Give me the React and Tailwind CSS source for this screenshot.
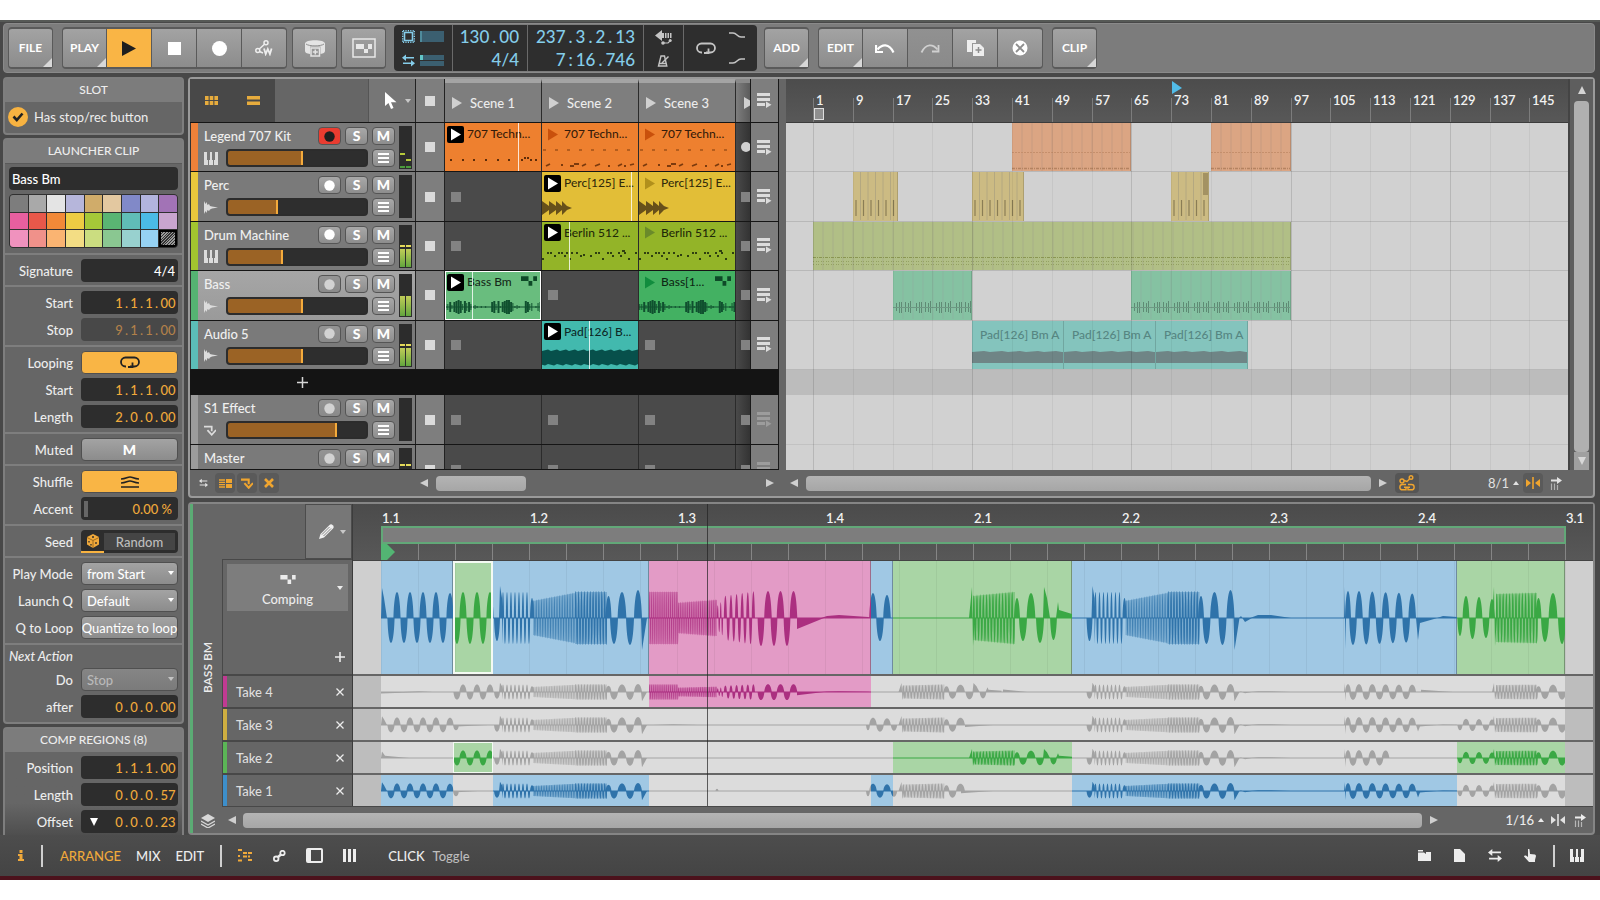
import React from "react";

/* ---------- data ---------- */

const TRACKS = [
  { name: "Legend 707 Kit", color: "#ee8139", icon: "keys", rec: "armed", level: 54, meter: "low", clips: [
    { name: "707 Techn...", bg: "#ee802f", art: "dots", playing: true, head: 74 },
    { name: "707 Techn...", bg: "#ee802f", art: "drums", tri: "#c9500c" },
    { name: "707 Techn...", bg: "#ee802f", art: "drums", tri: "#c9500c" },
  ] },
  { name: "Perc", color: "#e8c63c", icon: "wave", rec: "on", level: 36, meter: "off", clips: [
    null,
    { name: "Perc[125] E...", bg: "#e2be37", art: "perc", playing: true, head: 91 },
    { name: "Perc[125] E...", bg: "#e2be37", art: "perc", tri: "#b1901c" },
  ] },
  { name: "Drum Machine", color: "#a2c52f", icon: "keys", rec: "on", level: 40, meter: "mid", clips: [
    null,
    { name: "Berlin 512 ...", bg: "#93b428", art: "berlin", playing: true, head: 26 },
    { name: "Berlin 512 ...", bg: "#93b428", art: "berlin", tri: "#6a8a2a" },
  ] },
  { name: "Bass", color: "#55b372", icon: "wave", rec: "off", selected: true, level: 54, meter: "high", clips: [
    { name: "Bass Bm", bg: "#69bd7e", art: "bass", playing: true, head: 26, comp: true, selected: true },
    null,
    { name: "Bass[1...", bg: "#43b162", art: "bass", tri: "#118c3e", comp: true },
  ] },
  { name: "Audio 5", color: "#5bbdb8", icon: "wave", rec: "off", level: 54, meter: "mid", clips: [
    null,
    { name: "Pad[126] B...", bg: "#42b9ae", art: "pad", playing: true, head: 47 },
    null,
  ] },
];

const SWATCHES = [
  "#7d7d7d", "#a9a9a9", "#e4e4e4", "#b6b6db", "#d0ac6a", "#e3c8a0", "#8189c8", "#b2b4de", "#a273b6",
  "#e75f9f", "#e9584a", "#f28938", "#edcc43", "#a5c838", "#5ab573", "#60bdb7", "#4bbbe6", "#c9a5cf",
  "#f092be", "#f0918a", "#fab472", "#f3dd84", "#cbdd80", "#8ac791", "#98d1cf", "#96d2f3",
];

const BAR = 4.975;
const ORIGIN = 27;
const barX = (bar) => ORIGIN + (bar - 1) * BAR;

const LANES = [
  [{ from: 41, to: 65, kind: "orange" }, { from: 81, to: 97, kind: "orange" }],
  [{ from: 9, to: 18, kind: "yellow" }, { from: 33, to: 43.5, kind: "yellow" }, { from: 73, to: 80.5, kind: "yellow", fade: true }],
  [{ from: 1, to: 97, kind: "lime" }],
  [{ from: 17, to: 33, kind: "green" }, { from: 65, to: 97, kind: "green" }],
  [{ from: 33, to: 51.5, kind: "teal" }, { from: 51.5, to: 70, kind: "teal" }, { from: 70, to: 88.5, kind: "teal" }],
];

/* Editor x positions are measured from the left of the wave view. */
const REGIONS = [
  { x: 28, w: 72, c: "blue" },
  { x: 100, w: 40, c: "green", selected: true },
  { x: 140, w: 156, c: "blue" },
  { x: 296, w: 222, c: "pink" },
  { x: 518, w: 22, c: "blue" },
  { x: 540, w: 179, c: "green" },
  { x: 719, w: 385, c: "blue" },
  { x: 1104, w: 108, c: "green" },
];
const FILL = { blue: "#a0c8e4", green: "#a9d5a5", pink: "#e39bc6" };
const INK = { blue: "#2f73aa", green: "#3aa844", pink: "#ab2f80", gray: "#a3a3a3" };
const REGION_BG = { blue: "bg-[#a0c8e4]", green: "bg-[#a9d5a5]", pink: "bg-[#e39bc6]" };

const BEATS = ["1.1", "1.2", "1.3", "1.4", "2.1", "2.2", "2.3", "2.4", "3.1"];

/* ---------- wave shapes ---------- */

const lobe = (c, h, a) => ({ t: "lobe", c, h, a });
const wave = (x0, x1, p, a0, a1) => ({ t: "wave", x0, x1, p, a0, a1 });
const band = (x0, x1, a0, a1, p = 2.6) => ({ t: "band", x0, x1, a0, a1, p });
const poly = (...pts) => ({ t: "poly", pts });

const W_A = [
  poly([28, 0], [29, 30], [31, 20], [34, 0]),
  ...[38, 51, 64, 77, 90].map((c) => lobe(c, 3.6, -25)),
  ...[44, 57, 70, 83].map((c) => lobe(c, 3.6, 26)),
  lobe(97, 3.6, 25), lobe(103, 3, -18),
];
const W_B = [...[104, 117, 130].map((c) => lobe(c, 3.6, -26)), ...[110, 124, 137].map((c) => lobe(c, 3.6, 26))];
const wP = (o) => [
  lobe(o + 144, 3, -23), poly([o + 146, 0], [o + 147, 32], [o + 149, 20], [o + 149, -26], [o + 150, 0]),
  wave(o + 149, o + 178, 4, 26, 26), lobe(o + 179, 2, 20),
  band(o + 180, o + 222, 17, 25, 2.6), wave(o + 222, o + 254, 2.9, 27, 27), band(o + 222, o + 254, 26, 26, 2.9),
  lobe(o + 255.5, 3, 22), lobe(o + 261, 4, -26), lobe(o + 269, 4.4, 26), lobe(o + 277, 4, -27), lobe(o + 285, 4, 28),
  poly([o + 288, 0], [o + 289, -32], [o + 294, 0]),
];
const W_K = [
  band(296, 325, 26, 26, 2.1), band(325, 364, 15, 18, 2.2),
  wave(364, 370, 3, 12, 18), wave(371, 402, 5.6, 22, 27),
  ...[415, 427.5, 440.5].map((c) => lobe(c, 3.8, 27)), ...[408, 421, 434].map((c) => lobe(c, 3.4, -28)),
  poly([444, 0], [444, -11], [471, 0]), poly([468, 0], [474, 2], [486, 3], [515, 1], [518, 0]),
];
const W_C = [lobe(515, 2, -18), lobe(520, 3.8, 25), lobe(527, 3.8, -23), lobe(534, 3.8, 23), lobe(541, 3.2, -20)];
const wD = (o) => [
  poly([o + 616, 0], [o + 619, 31], [o + 620, -28], [o + 622, 0]),
  band(o + 620, o + 662, 22, 26, 3.2), wave(o + 620, o + 662, 3.2, 22, 26),
  lobe(o + 664, 3, 20), lobe(o + 670, 4, -23), lobe(o + 678, 4.4, 25), lobe(o + 687, 4, -25),
  poly([o + 690, 0], [o + 691, 31], [o + 694, 20], [o + 697, 0]), lobe(o + 700.5, 3.4, -22),
  poly([o + 703, 0], [o + 705, 16], [o + 706, 8], [o + 719, 4], [o + 719, 0]),
];
const W_TAIL = [poly([886, 0], [888, 2], [892, -4], [899, 0]), poly([897, 0], [905, 3], [918, 3], [938, 0])];
const wL = (n) => [
  poly([991, 0], [992, 31], [992, -31], [993, 0]),
  lobe(995, 3, 27),
  ...Array.from({ length: n }, (_, i) => lobe(1006 + i * 13.3, 3.8, 27 - i * 0.6)),
  ...Array.from({ length: n }, (_, i) => lobe(1000 + i * 13.3, 3.8, -27 + i * 0.6)),
];
const W_LT = [poly([1063, 0], [1065, -22], [1067, -5], [1081, -1], [1090, 2], [1104, 1], [1104, 0])];
const W_G = [
  lobe(1107, 2.6, -18), lobe(1113, 3.4, 22), lobe(1119.5, 3.4, -21), lobe(1126, 3.4, 21), lobe(1133, 3.4, -20), lobe(1139, 3, 19),
];
const W_G2 = [
  poly([1139, 0], [1141, 31], [1142, -28], [1144, 0]),
  band(1143, 1184, 24, 25, 3.2), wave(1143, 1184, 3.2, 24, 25),
  lobe(1185.5, 3, 20), lobe(1192, 4, -24), lobe(1200, 4.4, 25), lobe(1209, 4, -26),
];
const thin = (x0, x1, a) => poly([x0, 0], [x0, a], [x1, 0]);

const COMP = [...W_A.slice(0, -1), ...W_B, ...wP(0), ...W_K, ...W_C.slice(1, 4), ...wD(0), ...wP(592.5), ...W_TAIL, ...wL(5), ...W_LT, ...W_G, ...W_G2];
const BASE_P2 = [...wP(592.5), ...W_TAIL];
const TAKES = [
  { name: "Take 4", strip: "bg-[#c03a92]", on: [3],
    wave: [thin(28, 70, -5), poly([50, 0], [66, 3], [80, 0]), ...W_B, ...wP(0), ...W_K, ...wD(-70.5), thin(650, 674, 9), ...BASE_P2, ...wL(5), thin(1068, 1100, 8), ...W_G2] },
  { name: "Take 3", strip: "bg-[#cfae41]", on: [],
    wave: [...W_A, thin(104, 135, -5), ...wP(0), poly([300, 0], [320, 3], [345, 0]), ...W_C, ...wD(-70.5).slice(0, 6), thin(612, 640, -7), ...BASE_P2, ...wL(5), ...W_LT, ...W_G, ...W_G2] },
  { name: "Take 2", strip: "bg-[#5bb556]", on: [1, 5, 7],
    wave: [poly([28, 0], [29, 22], [32, 8], [56, 0]), ...W_B, ...wP(0), ...wD(0), ...BASE_P2, ...wL(3), lobe(1033, 2.4, 20), ...W_G, ...W_G2] },
  { name: "Take 1", strip: "bg-[#3d8fcb]", on: [0, 2, 4, 6],
    wave: [...W_A, thin(104, 125, -4), ...wP(0), lobe(364, 1.5, 8), ...W_C, ...wD(-70.5).slice(0, 6), thin(608, 640, -8), ...BASE_P2, ...wL(5), ...W_LT, ...W_G, ...W_G2] },
];

const r = (n) => Math.round(n * 100) / 100;
function lobePath(c, h, a, s) {
  const y = r(-a * s * 1.333);
  return `M${r(c - h)} 0C${r(c - h * 0.7)} ${y} ${r(c + h * 0.7)} ${y} ${r(c + h)} 0Z`;
}
function wavePath(q, s) {
  let d = "";
  let up = true;
  for (let x = q.x0 + q.p / 4; x < q.x1; x += q.p / 2) {
    const k = (x - q.x0) / (q.x1 - q.x0);
    const a = q.a0 + (q.a1 - q.a0) * k;
    d += lobePath(x, q.p / 3.6, up ? a : -a, s);
    up = !up;
  }
  return d;
}

function WaveInk({ items, scale, ink }) {
  let solid = "";
  let soft = "";
  let fine = "";
  for (const q of items) {
    if (q.t === "lobe") solid += lobePath(q.c, q.h, q.a, scale);
    else if (q.t === "poly") solid += "M" + q.pts.map(([x, y]) => `${r(x)} ${r(-y * scale)}`).join("L") + "Z";
    else if (q.t === "wave") solid += wavePath(q, scale);
    else {
      soft += `M${q.x0} ${r(-q.a0 * scale)}L${q.x1} ${r(-q.a1 * scale)}V${r(q.a1 * scale)}L${q.x0} ${r(q.a0 * scale)}Z`;
      fine += wavePath({ ...q, a0: q.a0 + 1, a1: q.a1 + 1 }, scale);
    }
  }
  return (
    <g fill={ink}>
      <path d={soft} opacity="0.35" />
      <path d={fine} opacity="0.75" />
      <path d={solid} />
    </g>
  );
}

function WaveRow({ items, height, scale, active, baseInk }) {
  const mid = Math.round(height / 2);
  return (
    <svg className="absolute inset-y-0 left-0" width="1212" height={height} viewBox={`0 ${-mid} 1212 ${height}`} aria-hidden="true">
      {baseInk && (
        <g>
          <rect x="28" y="-0.5" width="1184" height="1" fill={baseInk} />
          <WaveInk items={items} scale={scale} ink={baseInk} />
        </g>
      )}
      {active.map((i) => {
        const g = REGIONS[i];
        return (
          <svg key={i} x={g.x} y={-mid} width={g.w} height={height} viewBox={`${g.x} ${-mid} ${g.w} ${height}`}>
            {baseInk && <rect x={g.x} y={-mid} width={g.w} height={height} fill={FILL[g.c]} />}
            <rect x={g.x} y="-0.5" width={g.w} height="1" fill={INK[g.c]} />
            <WaveInk items={items} scale={scale} ink={INK[g.c]} />
          </svg>
        );
      })}
    </svg>
  );
}

/* ---------- icons ---------- */

function Svg({ w = 16, h = 16, box, children, className = "" }) {
  return (
    <svg width={w} height={h} viewBox={box || `0 0 ${w} ${h}`} fill="none" className={"shrink-0 " + className} aria-hidden="true">
      {children}
    </svg>
  );
}
const Tri = ({ dir = "right", className = "" }) => {
  const d = { right: "M1 1L9 5L1 9Z", left: "M9 1L1 5L9 9Z", up: "M1 9L5 1L9 9Z", down: "M1 1L5 9L9 1Z" }[dir];
  return <Svg w={10} h={10} className={className}><path d={d} fill="currentColor" /></Svg>;
};
const LaunchTri = () => <Svg w={10} h={13}><path d="M0 .5L10 6.500L0 12.500Z" fill="currentColor" /></Svg>;
const Caret = ({ className = "" }) => <Svg w={6} h={4} className={className}><path d="M0 0H6L3 4Z" fill="currentColor" /></Svg>;
const CaretUp = () => <Svg w={6} h={4}><path d="M0 4H6L3 0Z" fill="currentColor" /></Svg>;
const Keys = () => (
  <Svg w={14} h={13}>
    <path d="M0 0H3V8H4V13H0Z M5 8H6V0H8V8H9V13H5Z M11 0H14V13H10V8H11Z" fill="currentColor" />
  </Svg>
);
const WaveIcon = () => (
  <Svg w={14} h={13}>
    <path d="M0 0L1.500 3L2.500 1L3.500 4L5 3L6 5L8 5.500L14 6.500L8 7.500L6 8.500L5 10L3.500 9L2.500 12L1.500 10L0 13Z" fill="currentColor" />
  </Svg>
);
const Send = () => (
  <Svg w={12} h={11} box="0 0 14 12">
    <path d="M0 1.500H9V7" stroke="currentColor" strokeWidth="2" />
    <path d="M4 5.500L9 11L14 5.500" stroke="currentColor" strokeWidth="2" />
  </Svg>
);
const Lines = () => (
  <Svg w={11} h={10}><path d="M0 1H11M0 5H11M0 9H11" stroke="currentColor" strokeWidth="2" /></Svg>
);
const LoopIcon = () => (
  <Svg w={20} h={13}>
    <path d="M6 10.500H5.500A4.500 4.500 0 0 1 5.500 1.500H14.500A4.500 4.500 0 0 1 14.500 10.500H10" stroke="currentColor" strokeWidth="1.800" />
    <path d="M12.500 6.500V11H8" stroke="currentColor" strokeWidth="1.800" />
  </Svg>
);
const SwapIcon = ({ w = 13, h = 12 }) => (
  <Svg w={w} h={h} box="0 0 13 12">
    <path d="M4 0L0 3.200L4 6.400V4H12V2.400H4Z M9 5.600L13 8.800L9 12V9.600H1V8H9Z" fill="currentColor" />
  </Svg>
);
const CompIcon = ({ w = 17, h = 10 }) => (
  <Svg w={w} h={h} box="0 0 17 10">
    <path d="M0 0H8V5H0Z M8 5H12V10H8Z M13 0H17V5H13Z" fill="currentColor" />
  </Svg>
);
const SnapIcon = () => (
  <Svg w={14} h={12}><path d="M6.200 0H7.800V12H6.200Z M0 2L5 6L0 10Z M14 2L9 6L14 10Z" fill="currentColor" /></Svg>
);
const FollowIcon = () => (
  <Svg w={12} h={13}>
    <path d="M1 2.500H7V0L12 3.500L7 7V4.500H1Z" fill="currentColor" />
    <path d="M1.500 6.500V13M4.500 6.500V13M7.500 8V13" stroke="currentColor" strokeWidth="1.200" opacity="0.6" />
  </Svg>
);
const SceneMenu = () => (
  <Svg w={15} h={15}>
    <path d="M0 0H13V3H0Z M0 5H13V8H0Z M0 10H8V13H0Z M9 8.500L14.500 11.800L9 15Z" fill="currentColor" />
  </Svg>
);
const CutX = () => <Svg w={10} h={10}><path d="M1 1L9 9M9 1L1 9" stroke="currentColor" strokeWidth="2.600" /></Svg>;

/* ---------- small controls ---------- */

const SEG = "flex w-[45px] h-full items-center justify-center text-white border-y-2 border-r border-[#5a5a5a] first:border-l first:rounded-l last:rounded-r bg-linear-to-b";
function ToolButton({ label, menu, children, tone = "from-[#a3a3a3] to-[#8c8c8c]" }) {
  return (
    <button type="button" aria-label={label} className={`${SEG} relative text-[12px] font-bold ${tone}`}>
      {children}
      {menu && <Svg w={9} h={9} className="absolute right-0 bottom-0"><path d="M9 0V9H0Z" fill="#d8d8d8" /></Svg>}
    </button>
  );
}
const Group = ({ children, className = "" }) => <div className={`flex h-[42px] ${className}`}>{children}</div>;

/* Time readouts keep every separator as wide as a digit. */
function Readout({ value, cell }) {
  return (
    <span className="flex">
      {value.split(/([.:])/).map((p, i) => (
        <span key={i} className={/^[.:]$/.test(p) ? `${cell} text-center` : ""}>{p}</span>
      ))}
    </span>
  );
}

function PositionField({ id, value, dim, marker, label }) {
  const parts = value.split(".");
  return (
    <div className={`flex h-[23px] w-[97px] items-center justify-end rounded pr-[2px] ${dim ? "bg-[#484848] text-[#b1804a]" : "bg-[#2d2d2d] text-[#f0a93b]"}`}>
      {marker && <Tri dir="down" className="mr-auto ml-2 text-white" />}
      {parts.map((p, i) => (
        <React.Fragment key={i}>
          {i > 0 && <span className="w-[7px] text-center">.</span>}
          <input
            id={i === 0 ? id : undefined}
            aria-label={i === 0 ? undefined : `${label} part ${i + 1}`}
            defaultValue={p}
            className={`bg-transparent text-center outline-none ${p.length > 1 ? "w-4" : "w-2"}`}
          />
        </React.Fragment>
      ))}
    </div>
  );
}

function Row({ id, label, children }) {
  return (
    <div className="flex h-[23px] items-center justify-between pr-1">
      <label htmlFor={id} className="flex-1 pr-2 text-right whitespace-nowrap">{label}</label>
      {children}
    </div>
  );
}
const Section = ({ children, single }) => (
  <div className={`flex flex-col gap-1 border-t-2 border-[#7e7e7e] pt-1 ${single ? "pb-[3px]" : "pb-1"}`}>{children}</div>
);
const Pos = ({ id, label, ...rest }) => (
  <Row id={id} label={label}><PositionField id={id} label={label} {...rest} /></Row>
);
const WIDE = "flex h-[23px] w-[97px] items-center justify-center rounded border-[#505050]";
function Pick({ id, label, value, dim }) {
  return (
    <Row id={id} label={label}>
      <div className="relative flex h-[23px] w-[97px]">
        <select id={id} defaultValue={value} disabled={dim} className={`w-full appearance-none rounded border border-[#505050] bg-linear-to-b pl-[5px] font-medium ${dim ? "from-[#858585] to-[#7b7b7b] text-[#b9b9b9]" : "from-[#a3a3a3] to-[#8c8c8c] text-white"}`}>
          <option>{value}</option>
        </select>
        <Caret className={`pointer-events-none absolute top-[9px] right-1 ${dim ? "text-[#c4c4c4]" : "text-white"}`} />
      </div>
    </Row>
  );
}
const PanelTitle = ({ children }) => (
  <h2 className="flex h-[23px] items-center justify-center bg-[#7c7c7c] pb-[2px] text-[12px] font-medium">{children}</h2>
);

/* ---------- inspector ---------- */

function Inspector() {
  return (
    <aside className="flex h-[758px] w-[181px] shrink-0 flex-col gap-[3px] overflow-hidden text-[13px] leading-4 font-medium text-[#ededed]">
      <section className="h-[58px] shrink-0 rounded border-2 border-[#7e7e7e] bg-[#666]">
        <PanelTitle>SLOT</PanelTitle>
        <label className="flex h-[30px] items-center gap-[6px] pl-[3px] font-normal">
          <span className="relative flex size-5">
            <input type="checkbox" defaultChecked className="size-5 appearance-none rounded-full bg-[#f8b341]" />
            <Svg w={12} h={10} className="pointer-events-none absolute top-[5px] left-1"><path d="M1.500 4.500L4.800 8L10.500 1.500" stroke="#222" strokeWidth="2.600" /></Svg>
          </span>
          Has stop/rec button
        </label>
      </section>

      <section className="shrink-0 rounded border-2 border-[#7e7e7e] bg-[#666]">
        <PanelTitle>LAUNCHER CLIP</PanelTitle>
        <div className="flex flex-col gap-1 border-t border-[#5a5a5a] px-1 pt-[3px] pb-[5px]">
          <input aria-label="Clip name" defaultValue="Bass Bm" className="h-[23px] w-full rounded bg-[#2d2d2d] px-[3px] text-white outline-none" />
          <div className="grid h-[54px] grid-cols-9 grid-rows-3 gap-px overflow-hidden rounded border border-[#303030] bg-[#303030]">
            {SWATCHES.map((c) => (
              <button key={c} type="button" aria-label={`Colour ${c}`} style={{ backgroundColor: c }} />
            ))}
            <button type="button" aria-label="Track colour" className="border-2 border-black bg-[repeating-linear-gradient(135deg,#999_0_1px,#333_1px_2px)]" />
          </div>
        </div>
        <Section single>
          <Row id="sig" label="Signature">
            <input id="sig" defaultValue="4/4" className="h-[23px] w-[97px] rounded bg-[#2d2d2d] px-[3px] text-right text-white outline-none" />
          </Row>
        </Section>
        <Section>
          <Pos id="start" label="Start" value="1.1.1.00" />
          <Pos id="stop" label="Stop" value="9.1.1.00" dim />
        </Section>
        <Section>
          <Row id="looping" label="Looping">
            <button id="looping" type="button" className={`${WIDE} border bg-[#f9b545] text-[#222]`}><LoopIcon /></button>
          </Row>
          <Pos id="lstart" label="Start" value="1.1.1.00" />
          <Pos id="llen" label="Length" value="2.0.0.00" />
        </Section>
        <Section single>
          <Row id="muted" label="Muted">
            <button id="muted" type="button" className={`${WIDE} border bg-linear-to-b from-[#a3a3a3] to-[#8c8c8c] text-[14px] font-black text-white`}>M</button>
          </Row>
        </Section>
        <Section>
          <Row id="shuffle" label="Shuffle">
            <button id="shuffle" type="button" className={`${WIDE} border bg-[#f9b545] text-[#222]`}>
              <Svg w={18} h={12}>
                <path d="M0 3C5 3 6 1 9 1S13 3 18 3M0 7C5 7 6 5 9 5S13 7 18 7M0 11H18" stroke="currentColor" strokeWidth="1.500" />
              </Svg>
            </button>
          </Row>
          <Row id="accent" label="Accent">
            <div className="flex h-[23px] w-[97px] items-center rounded bg-[#2d2d2d] pl-[3px]">
              <span className="h-4 w-1 bg-[#666]" />
              <input id="accent" defaultValue="0.00 %" className="w-full min-w-0 bg-transparent pr-[6px] text-right text-[#f0a93b] outline-none" />
            </div>
          </Row>
        </Section>
        <Section single>
          <Row id="seed" label="Seed">
            <div className="flex h-[23px] w-[97px] rounded bg-[#2d2d2d]">
              <button type="button" aria-label="Roll seed" className="flex w-[23px] items-center justify-center border-b-2 border-[#f8b341] text-[#f0a93b]">
                <Svg w={14} h={14}>
                  <path d="M7 0L13 3V10.500L7 14L1 10.500V3Z" fill="currentColor" />
                  <path d="M1 3.500L7 6.500L13 3.500M7 6.500V14" stroke="#8a5c14" strokeWidth=".8" />
                  <path d="M3 7V8.500M5 10V11.500M10 8V10M6 3H8" stroke="#2d2d2d" strokeWidth="1.300" />
                </Svg>
              </button>
              <button id="seed" type="button" className="my-[3px] mr-[3px] flex flex-1 items-center justify-center bg-[#454545] text-[#bdbdbd]">Random</button>
            </div>
          </Row>
        </Section>
        <Section>
          <Pick id="pm" label="Play Mode" value="from Start" />
          <Pick id="lq" label="Launch Q" value="Default" />
          <Row id="ql" label="Q to Loop">
            <button id="ql" type="button" className={`${WIDE} border bg-linear-to-b from-[#a3a3a3] to-[#8c8c8c] font-normal whitespace-nowrap text-white`}>Quantize to loop</button>
          </Row>
        </Section>
        <div className="flex flex-col gap-1 border-t-2 border-[#7e7e7e] pb-1">
          <h3 className="h-[19px] pt-[3px] pl-1 italic">Next Action</h3>
          <Pick id="do" label="Do" value="Stop" dim />
          <Pos id="after" label="after" value="0.0.0.00" />
        </div>
      </section>

      <section className="relative shrink-0 rounded-t border-2 border-b-0 border-[#7e7e7e] bg-[#646464]">
        <PanelTitle>COMP REGIONS (8)</PanelTitle>
        <div className="flex flex-col gap-1 bg-linear-to-b from-[#666] from-60% to-[#4d4d4d] pt-1 pb-1">
          <Pos id="cpos" label="Position" value="1.1.1.00" />
          <Pos id="clen" label="Length" value="0.0.0.57" />
          <Pos id="coff" label="Offset" value="0.0.0.23" marker />
        </div>
      </section>
    </aside>
  );
}

/* ---------- toolbar ---------- */

function Toolbar() {
  return (
    <header className="mr-[5px] ml-[3px] flex h-[50px] items-center rounded border border-[#8a8a8a] bg-[#7c7c7c] pl-1">
      <Group className="mr-[9px]"><ToolButton menu>FILE</ToolButton></Group>
      <Group className="mr-[5px]">
        <ToolButton menu>PLAY</ToolButton>
        <ToolButton label="Play" tone="from-[#f9b545] to-[#f9b545]"><Svg w={14} h={15}><path d="M0 0L14 7.500L0 15Z" fill="#1e1e1e" /></Svg></ToolButton>
        <ToolButton label="Stop"><Svg w={13} h={13}><path d="M0 0H13V13H0Z" fill="#fff" /></Svg></ToolButton>
        <ToolButton label="Record"><Svg w={15} h={15}><circle cx="7.500" cy="7.500" r="7.500" fill="#fff" /></Svg></ToolButton>
        <ToolButton label="Automation write">
          <Svg w={18} h={16}>
            <circle cx="2.800" cy="10.500" r="2" stroke="#eee" strokeWidth="1.500" />
            <circle cx="11" cy="2.800" r="2" stroke="#eee" strokeWidth="1.500" />
            <path d="M4.300 9L9.500 4.200M4.500 11.500L8 13" stroke="#eee" strokeWidth="1.500" />
            <path d="M9 8.500L10.700 14L12.800 9L14.900 14L16.600 8.500" stroke="#eee" strokeWidth="1.800" />
          </Svg>
        </ToolButton>
      </Group>
      <Group className="mr-1">
        <ToolButton label="Overdub">
          <Svg w={20} h={17}>
            <path d="M0 3.500C0 -1 20 -1 20 3.500V11C20 12.500 18.500 13.500 15.500 14V6.500H5V14C1.500 13.500 0 12.500 0 11Z" fill="#e4e4e4" />
            <path d="M1 4C4 6.500 16 6.500 19 4" stroke="#8e8e8e" strokeWidth="1" />
            <path d="M6 8H14.500V16H6Z" stroke="#e4e4e4" strokeWidth="1.500" />
            <path d="M10.300 9.500V14.500M7.800 12H12.800" stroke="#e4e4e4" strokeWidth="1.500" />
          </Svg>
        </ToolButton>
      </Group>
      <Group className="mr-2">
        <ToolButton label="Comping record">
          <Svg w={24} h={20}>
            <path d="M1 1H23V19H1Z" stroke="#e8e8e8" strokeWidth="1.500" />
            <path d="M4 6H12V11H4Z M12 11H16V15H12Z M16 6H20V11H16Z" fill="#e8e8e8" />
          </Svg>
        </ToolButton>
      </Group>

      <div className="flex h-[46px] overflow-hidden rounded bg-[#2e2e2e] text-[17px] leading-[23px] font-medium text-[#85cdea]">
        <div className="flex w-[58px] flex-col justify-center gap-[11px] pl-2">
          <div className="flex items-center gap-[5px]">
            <Svg w={13} h={13}>
              <path d="M2.500 2.500H10.500V10.500H2.500Z" stroke="currentColor" strokeWidth="1.600" />
              <path d="M1 .7H12M1 12.300H12M.7 1V12M12.300 1V12" stroke="currentColor" strokeWidth="1.400" strokeDasharray="1.200 1.200" />
            </Svg>
            <span className="h-[11px] w-6 border-l-2 border-[#4f8b9c] bg-[#3b5f70]" />
          </div>
          <div className="flex items-center gap-[5px]">
            <SwapIcon w={13} h={13} />
            <span className="flex w-6 flex-col gap-px">
              <span className="h-[5px] border-l-[3px] border-[#62c6c8] bg-[#3b5f70]" />
              <span className="h-[5px] bg-[#3b5f70]" />
            </span>
          </div>
        </div>
        <div className="flex w-[75px] flex-col items-end border-l border-[#6a6a6a] pr-[8px]">
          <Readout value="130.00" cell="w-[10px]" />
          <span>4/4</span>
        </div>
        <div className="flex w-[116px] flex-col items-end border-l border-[#6a6a6a] pr-[8px]">
          <Readout value="237.3.2.13" cell="w-[10px]" />
          <Readout value="7:16.746" cell="w-[10px]" />
        </div>
        <div className="flex w-10 flex-col items-center justify-center gap-[10px] border-l border-[#6a6a6a] text-[#c4c4c4]">
          <Svg w={17} h={15}>
            <path d="M0 5.500L7 0V3H9V8H7V11Z M10 3H11.500V8H10Z M12.500 3H14V8H12.500Z M15 3H16.500V8H15Z" fill="currentColor" />
            <path d="M8 13H13L16 10" stroke="currentColor" strokeWidth="1.200" />
            <circle cx="8" cy="13" r="1.800" fill="currentColor" /><circle cx="15.200" cy="10.500" r="1.500" fill="currentColor" />
          </Svg>
          <Svg w={13} h={12}>
            <path d="M4 1H7.500L9.800 11H1.500Z M2.500 8.500H9" stroke="currentColor" strokeWidth="1.400" />
            <path d="M5 8L11.500 1.500" stroke="currentColor" strokeWidth="1.400" />
          </Svg>
        </div>
        <div className="flex w-[74px] items-center justify-between border-l border-[#6a6a6a] pr-3 pl-3 text-[#c4c4c4]">
          <LoopIcon />
          <span className="flex flex-col gap-5">
            <Svg w={16} h={6}><path d="M0 1H4C8 1 8 5 12 5H16" stroke="currentColor" strokeWidth="1.500" /></Svg>
            <Svg w={16} h={6}><path d="M0 5H4C8 5 8 1 12 1H16" stroke="currentColor" strokeWidth="1.500" /></Svg>
          </span>
        </div>
      </div>

      <Group className="mr-[9px] ml-[7px]"><ToolButton menu>ADD</ToolButton></Group>
      <Group className="mr-[9px]">
        <ToolButton menu>EDIT</ToolButton>
        <ToolButton label="Undo">
          <Svg w={20} h={11}><path d="M2.500 6.500C7 1 14 0 18.500 9.500" stroke="#fff" strokeWidth="2.200" /><path d="M1 2V9H8" stroke="#fff" strokeWidth="2.200" /></Svg>
        </ToolButton>
        <ToolButton label="Redo" tone="from-[#919191] to-[#8a8a8a]">
          <Svg w={20} h={11}><path d="M17.500 6.500C13 1 6 0 1.500 9.500" stroke="#d0d0d0" strokeWidth="1.800" /><path d="M18.500 2V8.500H12" stroke="#d0d0d0" strokeWidth="1.800" /></Svg>
        </ToolButton>
        <ToolButton label="Duplicate">
          <Svg w={17} h={16}>
            <path d="M0 0H9V3H5V12H0Z" fill="#eee" />
            <path d="M6 4H13L17 8V16H6Z" fill="#eee" />
            <path d="M11.500 7V13M8.500 10H14.500" stroke="#8e8e8e" strokeWidth="1.500" />
          </Svg>
        </ToolButton>
        <ToolButton label="Delete">
          <Svg w={16} h={16}><circle cx="8" cy="8" r="7.500" fill="#fff" /><path d="M4 4L12 12M12 4L4 12" stroke="#8e8e8e" strokeWidth="1.800" /></Svg>
        </ToolButton>
      </Group>
      <Group><ToolButton menu>CLIP</ToolButton></Group>
    </header>
  );
}

/* ---------- launcher ---------- */

function Meter({ kind }) {
  return (
    <div className="relative flex h-[43px] w-[13px] items-end gap-px bg-[#2c2c2c] px-[1px] pb-px">
      {kind === "low" && (
        <Svg w={12} h={16} className="absolute bottom-0 left-[1px]"><path d="M0 0H5V2H0Z M6 6H11V8H6Z" fill="#b6c93b" /><path d="M0 13H5V15H0Z M6 13H11V15H6Z" fill="#4b9a3c" /></Svg>
      )}
      {kind === "mid" && [0, 1].map((i) => (
        <span key={i} className="flex-1 border-t-2 border-[#e3d95a]"><span className="mt-[2px] block h-[18px] bg-linear-to-t from-[#61a53e] to-[#c0cc58]" /></span>
      ))}
      {kind === "high" && [0, 1].map((i) => <span key={i} className="h-5 flex-1 bg-linear-to-t from-[#61a53e] to-[#c0cc58]" />)}
      {kind === "top" && [0, 1].map((i) => <span key={i} className="h-[26px] flex-1 border-t-2 border-[#e3d95a]" />)}
    </div>
  );
}

const CHIP = "flex h-[18px] w-[23px] items-center justify-center rounded border border-[#555] bg-linear-to-b text-[14px] leading-none font-black text-white";
const CHIP_UP = "from-[#a8a8a8] to-[#8d8d8d]";
const REC_TONE = { armed: "from-[#ea3c30] to-[#ea3c30]", on: CHIP_UP, off: "from-[#949494] to-[#8a8a8a]" };

function TrackHeader({ name, icon, rec, level, meter, color, selected, partial }) {
  return (
    <div className={`flex h-full w-[225px] shrink-0 ${selected ? "bg-linear-to-b from-[#a6a6a6] to-[#9a9a9a]" : "bg-[#7a7a7a]"} text-[#f0f0f0]`}>
      <span className="w-2 shrink-0 border-l border-[#333]" style={{ backgroundColor: color }} />
      <div className="flex flex-1 flex-col gap-1 pt-1 pl-[6px]">
        <div className="flex h-[18px] items-center gap-1">
          <span className="flex-1 whitespace-nowrap">{name}</span>
          <button type="button" aria-label={`Record arm ${name}`} className={`${CHIP} ${REC_TONE[rec]}`}>
            <Svg w={11} h={11}><circle cx="5.500" cy="5.500" r="5.200" fill={rec === "armed" ? "#1f1f1f" : rec === "on" ? "#fff" : "#d2d2d2"} /></Svg>
          </button>
          <button type="button" aria-label={`Solo ${name}`} className={`${CHIP} ${CHIP_UP}`}>S</button>
          <button type="button" aria-label={`Mute ${name}`} className={`${CHIP} ${CHIP_UP}`}>M</button>
        </div>
        {!partial && (
          <div className="flex h-[18px] items-center gap-1">
            <span className="flex flex-1 text-[#dcdcdc]">{icon === "keys" ? <Keys /> : icon === "send" ? <Send /> : <WaveIcon />}</span>
            <input
              type="range"
              aria-label={`Volume ${name}`}
              defaultValue={level}
              className="h-[18px] w-[142px] appearance-none rounded border-2 border-[#2c2c2c] [&::-webkit-slider-thumb]:h-4 [&::-webkit-slider-thumb]:w-px [&::-webkit-slider-thumb]:appearance-none"
              style={{ background: `linear-gradient(to right,#9b6325 calc(${level}% - 2px),#f4ab3c calc(${level}% - 2px),#f4ab3c ${level}%,#2e2e2e ${level}%)` }}
            />
            <button type="button" aria-label={`Menu ${name}`} className={`${CHIP} ${CHIP_UP}`}><Lines /></button>
          </div>
        )}
      </div>
      <div className="flex w-5 shrink-0 pt-[3px] pl-1"><Meter kind={meter} /></div>
    </div>
  );
}

const bassBars = [3, 3, 5, 2, 5, 6, 7, 6, 3, 6, 4, 5, 3, 1, 2, 1, 0, 1, 0, 1, 0, 0, 5, 6, 3, 6, 1, 5, 6, 7, 7, 5, 4, 1, 2, 1, 0, 0, 6, 5, 3, 4, 0, 1, 4, 5];

function ClipArt({ art }) {
  if (art === "dots")
    return <g fill="#5f2c08">{[5, 17, 28, 40, 52, 63, 76, 79, 82, 85, 90].map((x, i) => <rect key={x} x={x} y={i === 7 || i === 8 ? 34 : 36} width="2" height="2" />)}</g>;
  if (art === "drums")
    return (
      <g stroke="#7c3a0d" strokeWidth="1.200">
        <path d="M1 27H97" strokeDasharray="3 9" />
        <path d="M4 43L8 41M19 42H21M28 43H32M32 41H37M40 43L44 41M53 43L58 41M66 43H68M76 43L80 41M82 43H84M88 42L92 41" strokeWidth="1.800" />
      </g>
    );
  if (art === "perc")
    return (
      <path d="M0 29L7 34V29L14 34V29L20 34V29L25 34L30 36L25 38L20 43V38L14 43V38L7 43V38L0 43Z" fill="#67501a" />
    );
  if (art === "berlin")
    return (
      <g fill="#2f3f10">
        {[5, 8, 16, 19, 24, 29, 34, 53, 56, 65, 68, 76, 82, 93].map((x) => <rect key={x} x={x} y="30" width="2" height="2" />)}
        {[0, 12, 22, 27, 38, 48, 60, 70, 78, 86].map((x, i) => <rect key={x} x={x} y={i % 3 ? 33 : 36} width="2" height="2" />)}
        <rect x="80" y="28" width="3" height="2" /><rect x="41" y="32" width="2" height="2" />
      </g>
    );
  if (art === "bass")
    return (
      <g fill="#10502f">
        <rect x="0" y="35.500" width="97" height="1" />
        {bassBars.map((a, i) => <rect key={i} x={i * 2.1} y={36 - a} width={a > 4 ? 2 : 1.3} height={a * 2} opacity={a > 4 ? 1 : 0.75} />)}
      </g>
    );
  return (
    <path d={"M0 30" + Array.from({ length: 33 }, (_, i) => `L${i * 3} ${r(30 - ((i * 7) % 3) * 0.7)}`).join("") + "V43" + Array.from({ length: 33 }, (_, i) => `L${96 - i * 3} ${r(43 + ((i * 5) % 3) * 0.7)}`).join("") + "Z"} fill="#07504b" />
  );
}

function Clip({ clip }) {
  if (!clip)
    return <div className="flex h-full items-center bg-[#4a4a4a] pl-[6px]"><span className="size-[10px] bg-[#828282]" /></div>;
  return (
    <div className="relative h-full overflow-hidden text-[12px] font-medium text-black/80" style={{ backgroundColor: clip.bg }}>
      <Svg w={97} h={49} className="absolute top-0 left-0"><ClipArt art={clip.art} /></Svg>
      <div className="relative flex h-[22px] items-center pl-[2px]">
        <button type="button" aria-label={`Launch ${clip.name}`} className={`mr-[3px] flex h-[17px] w-[17px] shrink-0 items-center justify-center rounded-xs ${clip.playing ? "bg-black text-white" : ""}`} style={{ color: clip.tri }}>
          <LaunchTri />
        </button>
        <span className="flex-1 whitespace-nowrap">{clip.name}</span>
        {clip.comp && <span className="mr-1 mb-[3px] text-[#0e4a28]"><CompIcon w={16} h={10} /></span>}
      </div>
      {clip.head && <span className="absolute inset-y-0 w-px bg-white/80" style={{ left: `${clip.head + 2}%` }} />}
      {clip.selected && <span className="absolute inset-0 border border-white" />}
    </div>
  );
}

const CELL = "w-[97px] shrink-0 border-r border-[#2b2b2b]";
const STOP_COL = "flex w-[30px] shrink-0 items-center justify-center border-x border-[#222] bg-[#7e7e7e]";

function LauncherRow({ track, dim, last, partial }) {
  return (
    <div className="flex min-h-0 border-b border-[#151515]">
      <TrackHeader {...track} partial={partial} />
      <div className={STOP_COL}><span className="size-[10px] bg-[#dadada]" /></div>
      <div className="flex w-[305px] overflow-hidden">
        {track.clips.map((c, i) => <div key={i} className={CELL}><Clip clip={c} /></div>)}
        <div className="flex flex-1 items-center overflow-hidden bg-linear-to-r from-[#4a4a4a] to-[#333] pl-[5px]">
          <span className={last ? "size-[10px] shrink-0 rounded-full bg-[#cfcfcf]" : "size-[10px] shrink-0 bg-[#828282]"} />
        </div>
      </div>
      <div className={`flex w-[29px] shrink-0 items-center justify-center border-x border-[#1a1a1a] bg-[#7e7e7e] ${dim ? "text-[#9c9c9c]" : "text-[#dcdcdc]"}`}><SceneMenu /></div>
    </div>
  );
}

function ScrollThumb({ className = "" }) {
  return <div className={`h-[15px] rounded bg-linear-to-b from-[#b4b4b4] to-[#a6a6a6] ${className}`} />;
}
const IconBtn = ({ label, on, children }) => (
  <button type="button" aria-label={label} className={`flex size-5 items-center justify-center rounded ${on ? "bg-[#5a5a5a] text-[#f0a52f]" : "text-[#e2e2e2]"}`}>{children}</button>
);

function Launcher() {
  const fx = { name: "S1 Effect", color: "#9c9c9c", icon: "send", rec: "off", level: 79, meter: "off", clips: [null, null, null] };
  const master = { name: "Master", color: "#9c9c9c", icon: "send", rec: "off", level: 79, meter: "top", clips: [null, null, null] };
  return (
    <div className="flex w-[589px] shrink-0 flex-col text-[13px] leading-4 font-medium">
      <div className="flex h-11 border-b border-[#151515] text-white">
        <div className="flex w-[85px] items-center justify-between bg-[#484848] pr-[15px] pl-[15px] text-[#e7ac3d]">
          <button type="button" aria-label="Clip launcher view">
            <Svg w={13} h={9}><path d="M0 0H3.600V4H0Z M4.700 0H8.300V4H4.700Z M9.400 0H13V4H9.400Z M0 5H3.600V9H0Z M4.700 5H8.300V9H4.700Z M9.400 5H13V9H9.400Z" fill="currentColor" /></Svg>
          </button>
          <button type="button" aria-label="Arranger view"><Svg w={13} h={9}><path d="M0 0H13V3.500H0Z M0 5.500H13V9H0Z" fill="currentColor" /></Svg></button>
        </div>
        <div className="flex-1 bg-[#666]" />
        <button type="button" aria-label="Pointer tool" className="flex w-[47px] items-center justify-center gap-2 border-l border-[#555] bg-[#767676]">
          <Svg w={12} h={17} className="ml-3"><path d="M0 0V14L3.500 11L6 17L8.500 16L6 10.200H11.500Z" fill="#fff" /></Svg>
          <Caret className="text-[#c8c8c8]" />
        </button>
        <div className={STOP_COL}><span className="size-[10px] bg-[#dadada]" /></div>
        <div className="flex w-[305px] overflow-hidden">
          {["Scene 1", "Scene 2", "Scene 3"].map((s) => (
            <button key={s} type="button" className={`${CELL} flex items-center gap-2 border-t-4 border-t-[#a4a4a4] bg-[#7e7e7e] pl-[7px] text-[#ececec]`}>
              <Svg w={10} h={12}><path d="M0 0L10 6L0 12Z" fill="#d0d0d0" /></Svg>{s}
            </button>
          ))}
          <div className="flex flex-1 items-center overflow-hidden border-t-4 border-[#8a8a8a] bg-linear-to-r from-[#7e7e7e] to-[#5c5c5c] pl-2"><Svg w={10} h={12}><path d="M0 0L10 6L0 12Z" fill="#d0d0d0" /></Svg></div>
        </div>
        <div className="flex w-[29px] items-center justify-center border-x border-[#1a1a1a] bg-[#7e7e7e] text-[#dcdcdc]"><SceneMenu /></div>
      </div>
      <div className="grid h-[247px] grid-rows-5">
        {TRACKS.map((t, i) => <LauncherRow key={t.name} track={t} last={i === 0} />)}
      </div>
      <div className="flex h-[25px] items-center bg-[#141414] pl-[107px] text-[#d6d6d6]">
        <button type="button" aria-label="Add track"><Svg w={11} h={11}><path d="M5.500 0V11M0 5.500H11" stroke="currentColor" strokeWidth="1.500" /></Svg></button>
      </div>
      <div className="grid h-[75px] grid-rows-[50px_50px] overflow-hidden border-b border-[#151515]">
        <LauncherRow track={fx} dim />
        <LauncherRow track={master} dim partial />
      </div>
      <div className="flex h-[26px] items-center">
        <div className="flex w-[225px] gap-[2px] pl-[3px]">
          <IconBtn label="Swap"><SwapIcon w={9} h={10} /></IconBtn>
          <IconBtn label="Track list" on><Svg w={13} h={9}><path d="M0 1H6M0 3.300H6M0 5.700H6M0 8H6" stroke="currentColor" strokeWidth="1.300" /><path d="M7 0H13V4H7Z M7 5H13V9H7Z" fill="currentColor" /></Svg></IconBtn>
          <IconBtn label="Sends" on><Svg w={12} h={11} box="0 0 14 12"><path d="M0 1.500H9V7M4 5.500L9 11L14 5.500" stroke="currentColor" strokeWidth="2.400" /></Svg></IconBtn>
          <IconBtn label="Crossfade" on><CutX /></IconBtn>
        </div>
        <Tri dir="left" className="ml-1 text-[#cfcfcf]" />
        <ScrollThumb className="ml-[7px] w-[90px]" />
        <Tri className="mr-1 ml-auto text-[#cfcfcf]" />
      </div>
    </div>
  );
}

/* ---------- arranger ---------- */

const CLIP_BG = { orange: "bg-[#dba583]", yellow: "bg-[#ccbb83]", lime: "bg-[#b1bf86]", green: "bg-[#85c2a2]", teal: "bg-[#84c4bd]" };

function LaneArt({ kind, w }) {
  const n = (step, from = step) => Array.from({ length: Math.max(0, Math.ceil((w - from) / step)) }, (_, i) => from + i * step);
  if (kind === "orange")
    return (
      <g>
        <path d={n(10).map((x) => `M${x} 0V48`).join("")} stroke="#c79b80" />
        <path d="M0 29.500H400" stroke="#c58f6c" strokeDasharray="2 1" /><path d="M0 45.500H400" stroke="#b58361" strokeDasharray="3 1 1 1" strokeWidth="1.500" />
      </g>
    );
  if (kind === "yellow")
    return (
      <g>
        <path d={n(7.500).map((x) => `M${x} 0V48`).join("")} stroke="#b4a880" />
        <path d={n(7.500, 3).map((x) => `M${x} 28V44`).join("")} stroke="#8a7d55" strokeWidth="1.200" />
      </g>
    );
  if (kind === "lime")
    return (
      <g>
        <path d={n(10).map((x) => `M${x} 0V48`).join("")} stroke="#a7af88" />
        <path d="M0 35.500H500" stroke="#8a9652" strokeDasharray="3 1 1 1" />
        <path d="M0 39.500H500M0 42.500H500" stroke="#94a163" strokeDasharray="1 2 1 1" />
      </g>
    );
  if (kind === "green")
    return (
      <g>
        <path d={n(10).map((x) => `M${x} 0V48`).join("")} stroke="#8ab5a0" />
        <path d={n(20, 0).map((x) => `M${x + 3.5} 32V40M${x + 6.5} 31V42M${x + 8.5} 31V42M${x + 12.5} 31V41M${x + 15.5} 32V41M${x + 17.5} 30V42`).join("")} stroke="#5f8a74" />
        <path d="M0 36.500H400" stroke="#6d9983" />
      </g>
    );
  return <path d={"M0 31" + n(6, 0).map((x, i) => `L${r(x)} ${r(31 - (i % 3) * 0.5)}`).join("") + `L${w} 31V42` + "L0 42Z"} fill="#6f8586" />;
}

function Arranger() {
  const bars = Array.from({ length: 19 }, (_, i) => 1 + i * 8);
  return (
    <div className="ml-[7px] flex min-w-0 flex-1 flex-col text-[13px] leading-4">
      <div className="flex h-[391px] overflow-hidden">
        <div className="relative flex min-w-0 flex-1 flex-col overflow-hidden">
          <div className="relative h-11 shrink-0 overflow-hidden border-b border-[#3c3c3c] bg-linear-to-b from-[#4c4c4c] to-[#585858] font-semibold text-[#f2f2f2]">
            {bars.map((b) => (
              <span key={b} className="absolute top-[13px] bottom-0 pl-[3px]" style={{ left: Math.round(barX(b)) }}>
                <span className="absolute top-[6px] bottom-0 left-0 w-px bg-[#7c7c7c]" />{b}
              </span>
            ))}
            <span className="absolute bottom-[2px] left-[28px] h-3 w-[10px] border border-[#dedede] bg-[#8f8f8f]" />
            <Svg w={10} h={13} className="absolute top-[2px] left-[386px]"><path d="M0 0L10 7L0 13Z" fill="#52bce8" /></Svg>
          </div>
          <div className="relative min-h-0 flex-1 bg-[#d1d1d1]">
            {bars.map((b) => (
              <span key={b} className={`absolute inset-y-0 z-10 w-px ${(b - 1) % 32 === 0 ? "bg-black/12" : "bg-black/5"}`} style={{ left: Math.round(barX(b)) }} />
            ))}
            <div className="grid h-[247px] grid-rows-5">
              {LANES.map((lane, i) => (
                <div key={i} className="relative border-b border-[#b8b8b8]">
                  {lane.map((c) => {
                    const x = Math.round(barX(c.from));
                    const w = Math.round(barX(c.to)) - x;
                    return (
                      <div key={c.from} className={`absolute inset-y-0 overflow-hidden border-r border-black/15 ${CLIP_BG[c.kind]}`} style={{ left: x, width: w }}>
                        <Svg w={w} h={49} className="absolute top-0 left-0"><LaneArt kind={c.kind} w={w} /></Svg>
                        {c.fade && <span className="absolute top-px right-0 h-[22px] w-[5px] bg-[#a39263]" />}
                        {c.kind === "teal" && <span className="relative block pt-[6px] pl-2 text-[12px] font-medium whitespace-nowrap text-[#568682]">Pad[126] Bm A</span>}
                      </div>
                    );
                  })}
                </div>
              ))}
            </div>
            <div className="h-[25px] bg-[#bcbcbc]" />
            <div className="h-[50px] border-b border-[#c2c2c2]" />
          </div>
        </div>
        <div className="flex w-[25px] shrink-0 flex-col items-center border-l-2 border-[#444] bg-[#5e5e5e] pt-[6px]">
          <Tri dir="up" className="mb-[6px] text-[#d4d4d4]" />
          <div className="w-[15px] flex-1 rounded bg-[#b0b0b0]" />
          <div className="flex h-[18px] w-[15px] items-center justify-center bg-[#a0a0a0] text-[#d8d8d8]"><Tri dir="down" /></div>
        </div>
      </div>
      <div className="flex h-[26px] items-center pl-[3px] text-[#e2e2e2]">
        <Tri dir="left" className="text-[#cfcfcf]" />
        <ScrollThumb className="mx-[7px] min-w-0 flex-1" />
        <Tri className="mr-[7px] text-[#cfcfcf]" />
        <button type="button" aria-label="Automation follow" className="mr-[69px] flex h-5 w-6 items-center justify-center rounded bg-[#555] text-[#f0a52f]">
          <Svg w={16} h={16}>
            <circle cx="3" cy="6" r="2" stroke="currentColor" strokeWidth="1.400" /><circle cx="12" cy="2.500" r="1.800" stroke="currentColor" strokeWidth="1.400" />
            <path d="M5 5.500L8 6.500L10.500 4" stroke="currentColor" strokeWidth="1.400" />
            <path d="M7 9.500H3.500A2.500 2.500 0 0 0 3.500 14.800H7V12.500M9 9.500H12.500A2.500 2.500 0 0 1 12.500 14.800H9V12.500M5 12.200H11" stroke="currentColor" strokeWidth="1.400" />
          </Svg>
        </button>
        <span>8/1</span><span className="mr-[4px] ml-[4px]"><CaretUp /></span>
        <IconBtn label="Snap" on><SnapIcon /></IconBtn>
        <span className="mr-[31px] ml-[7px]"><FollowIcon /></span>
      </div>
    </div>
  );
}

/* ---------- comp editor ---------- */

function Editor() {
  const ticks = Array.from({ length: 33 }, (_, i) => 28 + i * 37);
  return (
    <section className="flex h-[333px] rounded border-2 border-[#858585] bg-[#666] text-[13px] leading-4 font-medium text-[#ececec]">
      <div className="flex w-8 shrink-0 flex-col items-center border-l-[3px] border-[#5bab74] pb-[5px]">
        <span className="mt-[138px] rotate-180 text-[12px] font-semibold whitespace-nowrap [writing-mode:vertical-rl]">BASS BM</span>
        <button type="button" aria-label="Layers" className="mt-auto text-[#d8d8d8]">
          <Svg w={14} h={14}><path d="M7 0L14 4L7 8L0 4Z" fill="currentColor" /><path d="M0 7L7 11L14 7M0 10L7 14L14 10" stroke="currentColor" strokeWidth="1.300" /></Svg>
        </button>
      </div>
      <div className="flex min-w-0 flex-1 flex-col">
        <div className="flex h-[302px]">
          <div className="flex w-[130px] shrink-0 flex-col">
            <div className="flex h-[55px] justify-end">
              <button type="button" aria-label="Pencil tool" className="flex w-[47px] items-center justify-center gap-[6px] border border-[#4c4c4c] bg-[#777]">
                <Svg w={15} h={15} className="ml-2"><path d="M0 15L1.500 10L10.500 1Q12 -.5 13.800 1.200Q15.500 3 14 4.500L5 13.500Z" fill="#f0f0f0" /><path d="M3 10.500L10.500 3M4.500 12L12 4.500" stroke="#777" strokeWidth=".9" /></Svg>
                <Caret className="text-[#c8c8c8]" />
              </button>
            </div>
            <div className="flex h-[115px] flex-col justify-between border-t border-l border-[#484848] px-[4px] pt-[4px] pb-3">
              <button type="button" className="relative flex h-[47px] flex-col items-center justify-center gap-[7px] bg-[#7d7d7d] pt-[6px]">
                <CompIcon w={16} h={9} /><span>Comping</span>
                <Caret className="absolute top-[22px] right-[5px]" />
              </button>
              <button type="button" aria-label="Add take" className="mr-[3px] self-end"><Svg w={10} h={10}><path d="M5 0V10M0 5H10" stroke="currentColor" strokeWidth="1.600" /></Svg></button>
            </div>
            <ul>
              {TAKES.map((t) => (
                <li key={t.name} className="flex h-[33px] items-center border-t-2 border-l border-[#484848]">
                  <span className={`h-full w-1 ${t.strip}`} />
                  <span className="flex-1 pl-[9px] text-[#dedede]">{t.name}</span>
                  <button type="button" aria-label={`Remove ${t.name}`} className="mr-2"><Svg w={8} h={8}><path d="M.5 .5L7.500 7.500M7.500 .5L.5 7.500" stroke="currentColor" strokeWidth="1.300" /></Svg></button>
                </li>
              ))}
            </ul>
          </div>

          <div className="relative flex min-w-0 flex-1 flex-col overflow-hidden border-l border-[#3c3c3c]">
            <div className="relative h-[57px] shrink-0 border-b border-[#444] bg-linear-to-b from-[#4b4b4b] to-[#585858] font-semibold text-[#f2f2f2]">
              {ticks.map((x) => <span key={x} className="absolute bottom-0 h-4 w-px bg-[#858585]" style={{ left: x }} />)}
              {BEATS.map((b, i) => <span key={b} className="absolute top-[6px] h-4 pl-px" style={{ left: 28 + i * 148 }}>{b}</span>)}
              <span className="absolute top-[22px] left-[28px] h-[18px] w-[1185px] border-2 border-[#62a878] bg-[#7d7d7d]" />
              <Svg w={14} h={16} className="absolute top-[40px] left-[28px]"><path d="M0 0H6L14 8L6 16H0Z" fill="#53b573" /></Svg>
            </div>
            <div className="relative h-[113px] shrink-0 bg-[#cfcfcf]">
              {REGIONS.map((g) => (
                <span key={g.x} className={`absolute inset-y-0 border-r border-black/30 ${REGION_BG[g.c]}`} style={{ left: g.x, width: g.w }} />
              ))}
              {ticks.map((x) => <span key={x} className="absolute inset-y-0 w-px bg-black/5" style={{ left: x }} />)}
              <WaveRow items={COMP} height={113} scale={1} active={REGIONS.map((_, i) => i)} />
              <span className="absolute inset-y-0 left-[100px] w-10 border-2 border-[#f4faf3]" />
            </div>
            {TAKES.map((t, k) => (
              <div key={t.name} className="relative h-[33px] shrink-0 border-t-2 border-[#666] bg-[#bdbdbd]">
                <span className="absolute inset-y-0 left-[28px] w-[1184px] bg-[#dcdcdc]" />
                <WaveRow items={t.wave} height={31} scale={0.29} active={t.on} baseInk={INK.gray} />
                {k === 2 && <span className="absolute inset-y-0 left-[100px] w-10 border border-[#f4faf3]" />}
              </div>
            ))}
            <span className="absolute inset-y-0 left-[354px] w-px bg-[#222]/70" />
          </div>
        </div>
        <div className="flex h-[27px] items-center border-t border-[#484848] pl-[5px]">
          <Tri dir="left" className="text-[#cfcfcf]" />
          <ScrollThumb className="mr-[7px] ml-[6px] min-w-0 flex-1" />
          <Tri className="mr-[66px] text-[#cfcfcf]" />
          <span>1/16</span><span className="mr-1 ml-1"><CaretUp /></span>
          <IconBtn label="Snap"><SnapIcon /></IconBtn>
          <span className="mr-[7px] ml-[6px]"><FollowIcon /></span>
        </div>
      </div>
    </section>
  );
}

/* ---------- status bar ---------- */

function StatusBar() {
  const bar = "h-[22px] w-[2px] bg-[#cfcfcf]";
  return (
    <footer className="flex h-[41px] items-center bg-linear-to-b from-[#4d4d4d] to-[#444] text-[13px] leading-4 font-medium text-[#ededed]">
      <span className="flex w-[41px] justify-center text-[#f0a93b]">
        <Svg w={6} h={11}><path d="M1.500 0H4.500V3H1.500Z M0 4H4.500V9H6V11H0V9H1.500V6H0Z" fill="currentColor" /></Svg>
      </span>
      <span className={bar} />
      <nav className="flex gap-[15px] pl-[17px]">
        <a href="#arrange" className="text-[#f0a93b]">ARRANGE</a>
        <a href="#mix">MIX</a>
        <a href="#edit">EDIT</a>
      </nav>
      <span className={`${bar} ml-4`} />
      <div className="flex items-center pl-[5px]">
        <button type="button" aria-label="Note editor" className="flex w-[35px] justify-center text-[#f0a93b]">
          <Svg w={14} h={13}><path d="M0 1H4M5 4H9M0 7H2M10 4H14M5 7.500H9M0 11.500H4M10 11H14M10 7.500H12" stroke="currentColor" strokeWidth="2" /></Svg>
        </button>
        <button type="button" aria-label="Automation editor" className="flex w-[35px] justify-center">
          <Svg w={13} h={12}><circle cx="3.200" cy="8.800" r="2.300" stroke="currentColor" strokeWidth="1.800" /><circle cx="9.500" cy="3" r="2.200" stroke="currentColor" strokeWidth="1.800" /><path d="M5 7L8 4.500" stroke="currentColor" strokeWidth="2.400" /></Svg>
        </button>
        <button type="button" aria-label="Device panel" className="flex w-[35px] justify-center">
          <Svg w={17} h={15}><path d="M2 1H15Q16 1 16 2V13Q16 14 15 14H2Q1 14 1 13V2Q1 1 2 1Z" stroke="currentColor" strokeWidth="2" /><path d="M2 1H5V14H2Z" fill="currentColor" /></Svg>
        </button>
        <button type="button" aria-label="Mixer panel" className="flex w-[35px] justify-center">
          <Svg w={13} h={13}><path d="M0 0H3V13H0Z M5 0H8V13H5Z M10 0H13V13H10Z" fill="currentColor" /></Svg>
        </button>
      </div>
      <span className="ml-[21px]">CLICK</span>
      <span className="ml-2 text-[#bdbdbd]">Toggle</span>
      <div className="ml-auto flex items-center">
        <button type="button" aria-label="Browser" className="flex w-[35px] justify-center"><Svg w={13} h={11}><path d="M0 0H5V1.500H0Z M0 2.500H6L8 4V2H13V11H0Z" fill="currentColor" /></Svg></button>
        <button type="button" aria-label="Project" className="flex w-[35px] justify-center"><Svg w={11} h={13}><path d="M0 0H6L11 5V13H0Z" fill="currentColor" /></Svg></button>
        <button type="button" aria-label="Mappings" className="flex w-[35px] justify-center"><SwapIcon w={14} h={13} /></button>
        <button type="button" aria-label="Touch" className="flex w-[35px] justify-center"><Svg w={12} h={13}><path d="M4 0Q5 -.5 5.500 .5L6 5L11 5.500Q12 6 12 7L11 11V13H5L0 7.500Q0 6 2 6.500L4 8Z" fill="currentColor" /></Svg></button>
      </div>
      <span className={`${bar} mr-[15px] ml-[6px]`} />
      <button type="button" aria-label="On-screen keyboard" className="mr-[16px]"><Keys /></button>
    </footer>
  );
}

export default function App() {
  return (
    <div className="min-h-screen bg-white pt-5 font-['Lato','Open_Sans',sans-serif]">
      <div className="border-t-2 border-[#565956] bg-[#484848] pt-px">
        <Toolbar />
        <main className="mt-1 flex gap-1 pr-[5px] pl-[3px]">
          <Inspector />
          <div className="flex min-w-0 flex-1 flex-col gap-1">
            <section className="flex h-[421px] rounded border-2 border-[#9a9a9a] bg-[#666]">
              <Launcher />
              <Arranger />
            </section>
            <Editor />
          </div>
        </main>
        <StatusBar />
        <div className="h-1 bg-[#4c121c]" />
      </div>
    </div>
  );
}
